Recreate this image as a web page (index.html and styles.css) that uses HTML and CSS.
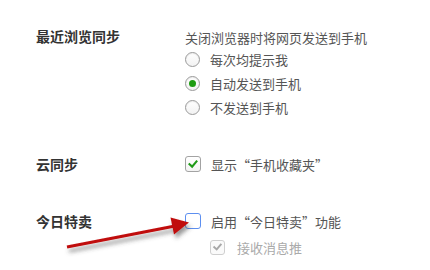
FILE: index.html
```html
<!DOCTYPE html>
<html lang="zh">
<head>
<meta charset="utf-8">
<link rel="stylesheet" href="styles.css">
</head>
<body>
<div class="page">
  <div class="row row-first">
    <div class="label">最近浏览同步</div>
    <div class="content">
      <div class="desc">关闭浏览器时将网页发送到手机</div>
      <div class="opt"><span class="radio"></span><span>每次均提示我</span></div>
      <div class="opt"><span class="radio checked"></span><span>自动发送到手机</span></div>
      <div class="opt"><span class="radio"></span><span>不发送到手机</span></div>
    </div>
  </div>
  <div class="row row-gap">
    <div class="label">云同步</div>
    <div class="content">
      <div class="opt"><span class="check on"><svg viewBox="0 0 16 16"><path d="M4 8.2 L7 11 L12 5" /></svg></span><span>显示“手机收藏夹”</span></div>
    </div>
  </div>
  <div class="row row-gap">
    <div class="label">今日特卖</div>
    <div class="content">
      <div class="opt"><span class="check focus"></span><span>启用“今日特卖”功能</span></div>
      <div class="opt sub"><span class="check disabled"><svg viewBox="0 0 16 16"><path d="M4 8.2 L7 11 L12 5" /></svg></span><span class="sub-text">接收消息推送</span></div>
    </div>
  </div>
</div>
<svg class="arrow" width="430" height="270" viewBox="0 0 430 270">
  <defs>
    <filter id="sh" x="-20%" y="-50%" width="140%" height="200%">
      <feDropShadow dx="2" dy="4" stdDeviation="2" flood-color="#444" flood-opacity="0.55"/>
    </filter>
  </defs>
  <g filter="url(#sh)">
    <line x1="67" y1="247" x2="175" y2="226" stroke="#c00d0d" stroke-width="3.2"/>
    <polygon points="189,222.5 170.5,217.5 174,234.5" fill="#c00d0d"/>
  </g>
</svg>
</body>
</html>
```

FILE: styles.css
```css
html, body {
  margin: 0;
  padding: 0;
  background: #fff;
}
body {
  width: 430px;
  height: 270px;
  overflow: hidden;
  position: relative;
  font-family: "Noto Sans CJK SC", "Noto Sans", sans-serif;
}
.page {
  padding-top: 28px;
}
.row {
  display: grid;
  grid-template-columns: 149px 1fr;
  padding-left: 36px;
}
.row-gap {
  margin-top: 33px;
}
.label {
  font-size: 14px;
  font-weight: bold;
  color: #333;
  line-height: 17px;
  height: 17px;
}
.row-gap .label {
  line-height: 24px;
  height: 24px;
}
.desc {
  font-size: 13px;
  color: #555;
  line-height: 18px;
  height: 18px;
  margin-top: 1px;
}
.opt {
  display: flex;
  align-items: center;
  height: 24px;
  font-size: 13px;
  color: #555;
  white-space: nowrap;
}
.radio {
  box-sizing: border-box;
  width: 15px;
  height: 15px;
  border: 1px solid #9a9a9a;
  border-radius: 50%;
  background: linear-gradient(#fff, #f2f2f2);
  box-shadow: inset 0 1px 1px rgba(0,0,0,0.08);
  margin-right: 10px;
  display: flex;
  align-items: center;
  justify-content: center;
}
.radio.checked::after {
  content: "";
  width: 7px;
  height: 7px;
  border-radius: 50%;
  background: #1e9c12;
}
.check {
  box-sizing: border-box;
  width: 16px;
  height: 16px;
  border: 1px solid #a3a3a3;
  border-radius: 3px;
  background: linear-gradient(#fff, #f3f3f3);
  margin-right: 10px;
  display: flex;
  align-items: center;
  justify-content: center;
}
.check svg {
  width: 14px;
  height: 14px;
}
.check path {
  fill: none;
  stroke: #1f9a17;
  stroke-width: 2.4;
  stroke-linecap: square;
}
.check.focus {
  border-color: #5d8ff0;
  background: #fff;
}
.opt.sub {
  padding-left: 25px;
  height: 26px;
  margin-top: 1px;
  width: 92px;
  overflow: hidden;
}
.check.disabled {
  width: 15px;
  height: 15px;
  border-color: #cfcfcf;
  background: #fafafa;
  margin-right: 12px;
}
.check.disabled path {
  stroke: #a8a8a8;
}
.sub-text {
  color: #aaa;
}
.arrow {
  position: absolute;
  left: 0;
  top: 0;
  pointer-events: none;
}
```
